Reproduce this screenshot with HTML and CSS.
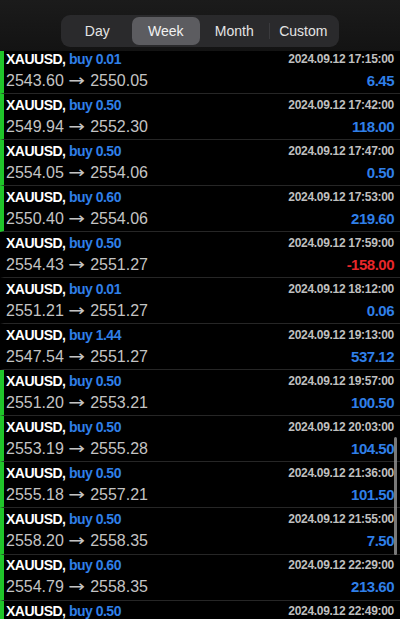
FILE: index.html
```html
<!DOCTYPE html>
<html>
<head>
<meta charset="utf-8">
<link rel="stylesheet" href="styles.css">
</head>
<body>
<div class="screen">
  <header class="top">
    <div class="seg">
      <div class="seg-item">Day</div>
      <div class="seg-item active">Week</div>
      <div class="seg-item">Month</div>
      <div class="seg-item divided">Custom</div>
    </div>
  </header>
  <ul class="list">
    <li class="row win"><div class="l1"><span class="sym">XAUUSD,</span> <span class="side">buy 0.01</span></div><div class="date">2024.09.12 17:15:00</div><div class="price">2543.60 <span class="arr">→</span> 2550.05</div><div class="pl">6.45</div></li>
    <li class="row win"><div class="l1"><span class="sym">XAUUSD,</span> <span class="side">buy 0.50</span></div><div class="date">2024.09.12 17:42:00</div><div class="price">2549.94 <span class="arr">→</span> 2552.30</div><div class="pl">118.00</div></li>
    <li class="row win"><div class="l1"><span class="sym">XAUUSD,</span> <span class="side">buy 0.50</span></div><div class="date">2024.09.12 17:47:00</div><div class="price">2554.05 <span class="arr">→</span> 2554.06</div><div class="pl">0.50</div></li>
    <li class="row win"><div class="l1"><span class="sym">XAUUSD,</span> <span class="side">buy 0.60</span></div><div class="date">2024.09.12 17:53:00</div><div class="price">2550.40 <span class="arr">→</span> 2554.06</div><div class="pl">219.60</div></li>
    <li class="row"><div class="l1"><span class="sym">XAUUSD,</span> <span class="side">buy 0.50</span></div><div class="date">2024.09.12 17:59:00</div><div class="price">2554.43 <span class="arr">→</span> 2551.27</div><div class="pl neg">-158.00</div></li>
    <li class="row"><div class="l1"><span class="sym">XAUUSD,</span> <span class="side">buy 0.01</span></div><div class="date">2024.09.12 18:12:00</div><div class="price">2551.21 <span class="arr">→</span> 2551.27</div><div class="pl">0.06</div></li>
    <li class="row"><div class="l1"><span class="sym">XAUUSD,</span> <span class="side">buy 1.44</span></div><div class="date">2024.09.12 19:13:00</div><div class="price">2547.54 <span class="arr">→</span> 2551.27</div><div class="pl">537.12</div></li>
    <li class="row win"><div class="l1"><span class="sym">XAUUSD,</span> <span class="side">buy 0.50</span></div><div class="date">2024.09.12 19:57:00</div><div class="price">2551.20 <span class="arr">→</span> 2553.21</div><div class="pl">100.50</div></li>
    <li class="row win"><div class="l1"><span class="sym">XAUUSD,</span> <span class="side">buy 0.50</span></div><div class="date">2024.09.12 20:03:00</div><div class="price">2553.19 <span class="arr">→</span> 2555.28</div><div class="pl">104.50</div></li>
    <li class="row win"><div class="l1"><span class="sym">XAUUSD,</span> <span class="side">buy 0.50</span></div><div class="date">2024.09.12 21:36:00</div><div class="price">2555.18 <span class="arr">→</span> 2557.21</div><div class="pl">101.50</div></li>
    <li class="row win"><div class="l1"><span class="sym">XAUUSD,</span> <span class="side">buy 0.50</span></div><div class="date">2024.09.12 21:55:00</div><div class="price">2558.20 <span class="arr">→</span> 2558.35</div><div class="pl">7.50</div></li>
    <li class="row win"><div class="l1"><span class="sym">XAUUSD,</span> <span class="side">buy 0.60</span></div><div class="date">2024.09.12 22:29:00</div><div class="price">2554.79 <span class="arr">→</span> 2558.35</div><div class="pl">213.60</div></li>
    <li class="row win"><div class="l1"><span class="sym">XAUUSD,</span> <span class="side">buy 0.50</span></div><div class="date">2024.09.12 22:49:00</div></li>
  </ul>
  <div class="scrollbar"></div>
</div>
</body>
</html>
```
FILE: styles.css
```css
* { box-sizing: border-box; }
html, body {
  margin: 0;
  padding: 0;
  background: #000;
  height: 619px;
  overflow: hidden;
}
body {
  font-family: "Liberation Sans", Arial, sans-serif;
  color: #fff;
}
.screen {
  position: relative;
  width: 400px;
  height: 619px;
  overflow: hidden;
}
.top {
  position: relative;
  z-index: 2;
  height: 51px;
  margin-bottom: -3px;
  padding-top: 15px;
  background: linear-gradient(#1b1b1b, #131313);
  display: flex;
  justify-content: center;
}
.seg {
  width: 278px;
  height: 32px;
  background: #2a2a2c;
  border-radius: 9px;
  padding: 2px;
  display: grid;
  grid-template-columns: repeat(4, 1fr);
}
.seg-item {
  display: flex;
  align-items: center;
  justify-content: center;
  font-size: 14px;
  color: #e4e4e4;
  border-radius: 7px;
}
.seg-item.active {
  background: #5c5c60;
  color: #f2f2f2;
}
.seg-item.divided {
  border-left: 1px solid #3a3a3d;
  border-radius: 0;
  height: 16px;
  align-self: center;
}
.list {
  list-style: none;
  margin: 0;
  padding: 0;
}
.row {
  height: 46.06px;
  border-bottom: 1px solid #262626;
  border-left: 4px solid transparent;
  padding: 1px 6px 0 2px;
  display: grid;
  grid-template-columns: 1fr auto;
  grid-template-rows: 19px 24px;
  align-items: center;
}
.row.win {
  border-left-color: #20c52a;
}
.l1 {
  font-size: 14px;
  font-weight: bold;
  letter-spacing: -0.5px;
  white-space: nowrap;
}
.sym { color: #fff; }
.side { color: #2f7fe8; }
.date {
  font-size: 12px;
  font-weight: bold;
  letter-spacing: -0.3px;
  color: #bfbfbf;
  text-align: right;
}
.price {
  font-size: 16px;
  color: #c4c4c4;
  white-space: nowrap;
}
.arr {
  font-family: "DejaVu Sans", sans-serif;
  font-size: 16px;
  display: inline-block;
  transform: scaleX(1.25);
  margin: 0 2px;
}
.pl {
  font-size: 15px;
  font-weight: bold;
  letter-spacing: -0.5px;
  color: #2f7fe8;
  text-align: right;
}
.pl.neg { color: #e8272a; }
.scrollbar {
  position: absolute;
  left: 394px;
  top: 437px;
  width: 3px;
  height: 118px;
  border-radius: 2px;
  background: rgba(160, 160, 160, 0.75);
  z-index: 3;
}
```
